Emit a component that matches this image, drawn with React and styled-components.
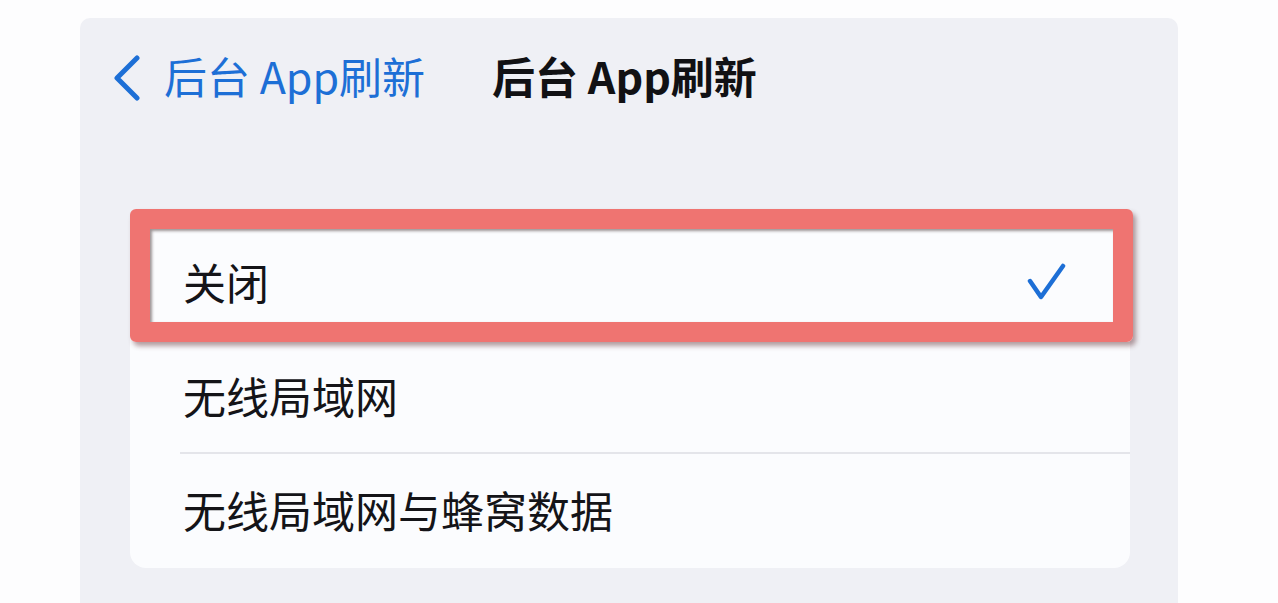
import React from "react";
import styled, { createGlobalStyle } from "styled-components";

const GlobalStyle = createGlobalStyle`
  html, body {
    margin: 0;
    padding: 0;
    background: #fdfdfe;
  }
  body {
    font-family: "Noto Sans CJK SC", "Noto Sans", sans-serif;
  }
`;

const options = [
  { label: "关闭", checked: true },
  { label: "无线局域网" },
  { label: "无线局域网与蜂窝数据" },
];

const App = () => {
  return (
    <>
      <GlobalStyle />
      <Page>
        <Panel>
          <NavBar>
            <BackButton>
              <svg width="30" height="46" viewBox="0 0 30 46">
                <path
                  d="M25 3 L5 23 L25 43"
                  fill="none"
                  stroke="#1d6fd6"
                  strokeWidth="5"
                  strokeLinecap="round"
                  strokeLinejoin="round"
                />
              </svg>
              <span>后台 App刷新</span>
            </BackButton>
            <Title>后台 App刷新</Title>
          </NavBar>
          <OptionList>
            {options.map((item, i) => (
              <OptionRow key={i} $last={i === options.length - 1}>
                <span>{item.label}</span>
                {item.checked && (
                  <svg width="40" height="40" viewBox="0 0 40 40">
                    <path
                      d="M4 19 L15 35 L37 4"
                      fill="none"
                      stroke="#1d6fd6"
                      strokeWidth="4.5"
                      strokeLinecap="round"
                      strokeLinejoin="round"
                    />
                  </svg>
                )}
                {item.checked && <Highlight />}
              </OptionRow>
            ))}
          </OptionList>
        </Panel>
      </Page>
    </>
  );
};

const Page = styled.div`
  width: 1278px;
  height: 603px;
  overflow: hidden;
  padding-top: 18px;
  box-sizing: border-box;
`;

const Panel = styled.div`
  margin-left: 80px;
  width: 1098px;
  height: 600px;
  background: #eff0f5;
  border-radius: 10px 10px 0 0;
  display: flex;
  flex-direction: column;
`;

const NavBar = styled.div`
  display: flex;
  align-items: center;
  height: 120px;
  padding-left: 32px;
  gap: 67px;
`;

const BackButton = styled.div`
  display: flex;
  align-items: center;
  gap: 22px;
  color: #1d6fd6;
  font-size: 43px;
  line-height: 1;
  svg {
    display: block;
  }
  span {
    padding-bottom: 6px;
  }
`;

const Title = styled.div`
  color: #111114;
  font-size: 43px;
  font-weight: 700;
  line-height: 1;
  padding-bottom: 6px;
`;

const OptionList = styled.div`
  margin: 88px 0 0 50px;
  width: 1000px;
  background: #fbfcfe;
  border-radius: 16px;
  display: flex;
  flex-direction: column;
`;

const OptionRow = styled.div`
  position: relative;
  height: 114px;
  display: flex;
  align-items: center;
  justify-content: space-between;
  padding: 0 64px 4px 53px;
  box-sizing: border-box;
  font-size: 43px;
  color: #141418;
  &::after {
    content: "";
    display: ${(p) => (p.$last ? "none" : "block")};
    position: absolute;
    left: 50px;
    right: 0;
    bottom: 0;
    height: 2px;
    background: #e4e5ea;
  }
  svg {
    display: block;
    margin-top: 2px;
  }
`;

const Highlight = styled.div`
  position: absolute;
  top: -17px;
  left: 0;
  right: -3px;
  bottom: -2px;
  border: 20px solid #ef7471;
  border-radius: 6px;
  box-shadow: 3px 4px 5px rgba(90, 40, 45, 0.45),
    inset 2px 2px 3px rgba(40, 20, 20, 0.45);
  z-index: 2;
  pointer-events: none;
`;

export default App;
